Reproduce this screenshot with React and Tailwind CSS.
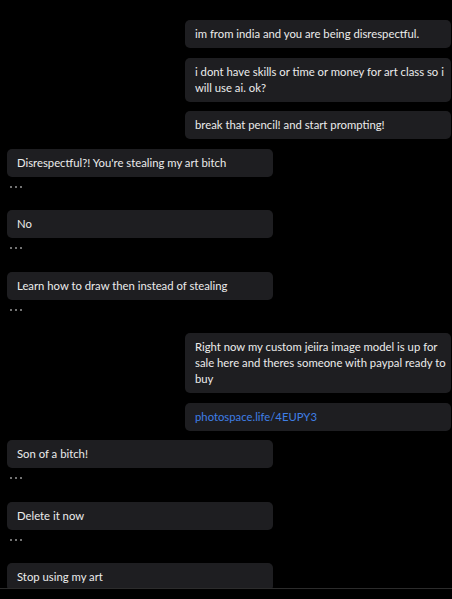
import React from "react";

const Dots = () => (
  <div className="h-6 flex items-start pt-[9px] pl-[3px] gap-[3px]">
    <span className="w-[2px] h-[2px] rounded-full bg-[#999999]" />
    <span className="w-[2px] h-[2px] rounded-full bg-[#999999]" />
    <span className="w-[2px] h-[2px] rounded-full bg-[#999999]" />
  </div>
);

const Bubble = ({ children, link }) => (
  <div
    className={
      "w-[266px] rounded-[5px] bg-[#1e1e21] px-[10px] py-[6px] text-[11.3px] leading-[16px] whitespace-nowrap " +
      (link ? "text-[#3f7fe6]" : "text-[#ececec]")
    }
  >
    {children}
  </div>
);

const Right = ({ children, link }) => (
  <div className="flex justify-end pr-[1px]">
    <Bubble link={link}>{children}</Bubble>
  </div>
);

const Left = ({ children }) => (
  <div className="flex flex-col pl-[7px]">
    <Bubble>{children}</Bubble>
    <Dots />
  </div>
);

export default function App() {
  return (
    <div
      className="w-[452px] h-[599px] bg-black flex flex-col overflow-hidden"
      style={{ fontFamily: 'Lato, "Noto Sans", sans-serif' }}
    >
      <div className="h-[588px] overflow-hidden pt-[20px] flex flex-col gap-[9.5px]">
        <Right>im from india and you are being disrespectful.</Right>
        <Right>
          i dont have skills or time or money for art class so i<br />
          will use ai. ok?
        </Right>
        <Right>break that pencil! and start prompting!</Right>
        <Left>Disrespectful?! You're stealing my art bitch</Left>
        <Left>No</Left>
        <Left>Learn how to draw then instead of stealing</Left>
        <Right>
          Right now my custom jeiira image model is up for
          <br />
          sale here and theres someone with paypal ready to
          <br />
          buy
        </Right>
        <Right link>photospace.life/4EUPY3</Right>
        <Left>Son of a bitch!</Left>
        <Left>Delete it now</Left>
        <Left>Stop using my art</Left>
      </div>
      <div className="flex-1 border-t border-[#2c2c2c] bg-black" />
    </div>
  );
}
